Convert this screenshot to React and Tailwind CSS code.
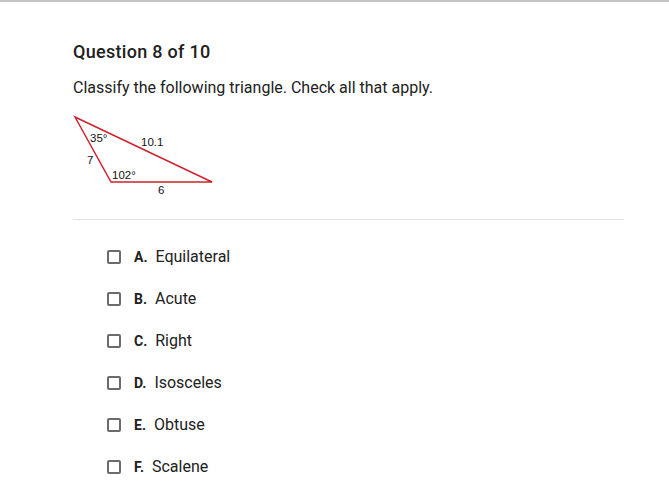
const options = [
  { letter: "A.", label: "Equilateral" },
  { letter: "B.", label: "Acute" },
  { letter: "C.", label: "Right" },
  { letter: "D.", label: "Isosceles" },
  { letter: "E.", label: "Obtuse" },
  { letter: "F.", label: "Scalene" },
];

function Triangle() {
  return (
    <svg width="150" height="88" viewBox="0 0 150 88" className="block">
      <polygon points="2,6 38,71 139,71" fill="none" stroke="#d0222e" strokeWidth="1.5" />
      <g fontFamily="Liberation Sans, Arial, sans-serif" fontSize="11.5" fill="#111">
        <text x="17" y="31">35°</text>
        <text x="68" y="35">10.1</text>
        <text x="14" y="53">7</text>
        <text x="39" y="68">102°</text>
        <text x="85" y="83">6</text>
      </g>
    </svg>
  );
}

export default function App() {
  return (
    <div className="w-[669px] h-[504px] bg-white border-t-2 border-[#c4c4c4] font-['Roboto',sans-serif] text-[#212121] overflow-hidden">
      <div className="pl-[73px] pr-[45px]">
        <h1 className="pt-[40px] text-[18px] leading-[20px] font-medium tracking-[0.3px]">Question 8 of 10</h1>
        <p className="mt-[16px] text-[16px] leading-[20px]">Classify the following triangle. Check all that apply.</p>
        <div className="mt-[13px]">
          <Triangle />
        </div>
        <div className="mt-[20px] border-t border-[#e2e2e2]" />
        <div className="mt-[27px] pl-[34px] flex flex-col gap-[22px]">
          {options.map((o) => (
            <label key={o.letter} className="flex items-center h-[20px]">
              <span className="w-[14px] h-[14px] border-2 border-[#6b6b6b] rounded-[2px]" />
              <span className="ml-[13px] text-[14px] font-bold">{o.letter}</span>
              <span className="ml-[8px] text-[16px]">{o.label}</span>
            </label>
          ))}
        </div>
      </div>
    </div>
  );
}
